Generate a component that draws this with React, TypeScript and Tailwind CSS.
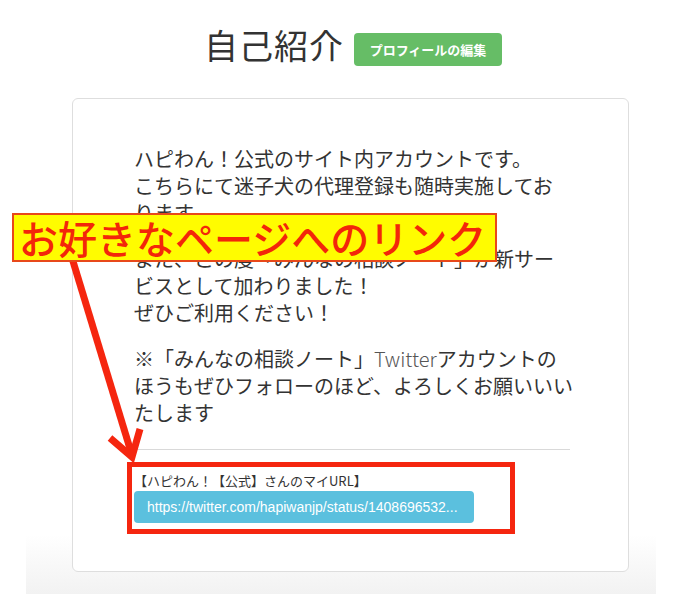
import React from "react";

const jp = { fontFamily: '"Noto Sans CJK JP", "Noto Sans", sans-serif' };

export default function App() {
  return (
    <div
      className="relative w-[678px] h-[614px] overflow-hidden bg-white text-[#333]"
      style={jp}
    >
      {/* Title row */}
      <div className="flex items-start pl-[204px] pt-[25px]">
        <h1 className="h-[40px] text-[34px] leading-[40px] font-normal tracking-[1px] text-[#333]">
          自己紹介
        </h1>
        <button className="ml-[10px] mt-[8px] flex h-[33px] w-[148px] items-center justify-center rounded-[4px] bg-[#66bd66] text-[13px] font-bold text-white">
          プロフィールの編集
        </button>
      </div>

      {/* Panel */}
      <div className="mt-[32px] ml-[26px] w-[630px] pb-[22px] bg-[linear-gradient(to_bottom,#ffffff_0%,#ffffff_88%,#f2f2f2_100%)]">
        <div className="ml-[46px] w-[557px] rounded-[6px] border border-[#dedede] bg-white pl-[61px] pt-[46px] pb-[48px]">
          <div className="w-[436px] text-[20px] leading-[27px] text-[#333]">
            <p className="whitespace-nowrap">
              ハピわん！公式のサイト内アカウントです。
              <br />
              こちらにて迷子犬の代理登録も随時実施してお
              <br />
              ります。
            </p>
            <p className="mt-[19px] whitespace-nowrap">
              また、この度「みんなの相談ノート」が新サー
              <br />
              ビスとして加わりました！
              <br />
              ぜひご利用ください！
            </p>
            <p className="mt-[19px] whitespace-nowrap">
              ※「みんなの相談ノート」
              <span className="font-light text-[#555]">Twitter</span>
              アカウントの
              <br />
              ほうもぜひフォローのほど、よろしくお願いいい
              <br />
              たします
            </p>
          </div>
          <div className="mt-[23px] -ml-[6px] h-px w-[442px] bg-[#d9d9d9]" />
          <div className="mt-[22px] text-[13px] leading-[18px] text-[#333]">
            【ハピわん！【公式】さんのマイURL】
          </div>
          <div
            className="mt-[1px] flex h-[32px] w-[340px] items-center rounded-[4px] bg-[#5bc0de] pl-[13px] text-[14px] text-white"
            style={{ fontFamily: '"Liberation Sans", Arial, sans-serif' }}
          >
            https://twitter.com/hapiwanjp/status/1408696532...
          </div>
        </div>
      </div>

      {/* Annotation: red box */}
      <div className="absolute left-[127px] top-[462px] h-[72px] w-[388px] border-[5px] border-[#f5260f]" />

      {/* Annotation: arrow */}
      <svg
        className="absolute left-0 top-0 pointer-events-none"
        width="678"
        height="614"
        viewBox="0 0 678 614"
      >
        <line
          x1="72"
          y1="258"
          x2="131"
          y2="452"
          stroke="#f5260f"
          strokeWidth="7"
        />
        <polyline
          points="110,438 132,457 140,429"
          fill="none"
          stroke="#f5260f"
          strokeWidth="7"
          strokeLinecap="butt"
          strokeLinejoin="miter"
        />
      </svg>

      {/* Annotation: banner */}
      <div className="absolute left-[12px] top-[213px] flex h-[49px] w-[485px] items-center border-2 border-[#e8481a] bg-[#fffc00] pl-[5px]">
        <span className="whitespace-nowrap text-[39px] font-medium leading-none text-[#f3260a]">
          お好きなページへのリンク
        </span>
      </div>
    </div>
  );
}
